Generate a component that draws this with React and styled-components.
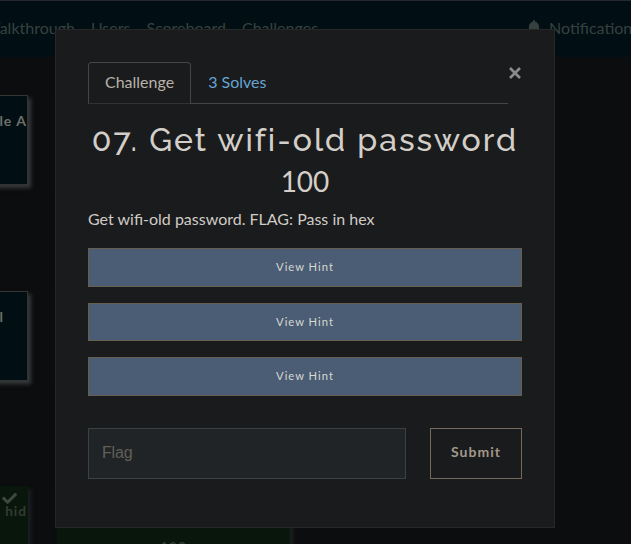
import React from "react";
import styled, { createGlobalStyle } from "styled-components";

const Global = createGlobalStyle`
  * { box-sizing: border-box; }
  body { margin: 0; background: #0c0d0f; font: 16px/24px Lato, sans-serif; overflow: hidden; }
  button, input { font-family: inherit; margin: 0; }
`;

const Page = styled.div`
  height: 544px;
  overflow: hidden;
  position: relative;
`;

const Navbar = styled.nav`
  height: 57px;
  border-top: 1px solid #25292f;
  background: #010e13;
  color: #36413f;
  display: flex;
  align-items: center;
  padding-bottom: 2px;
  white-space: nowrap;
`;

const NavLinks = styled.div`
  display: flex;
  gap: 16px;
  margin-left: -16px;
  width: 543px;
  flex-shrink: 0;
`;

const Notifications = styled.div`
  display: flex;
  gap: 8px;
  svg { margin-top: 4px; }
`;

const Board = styled.main`
  display: grid;
  grid-template-columns: 233px 233px;
  grid-auto-rows: 90px;
  gap: 106px 29px;
  margin: 38px 0 0 -205px;
`;

const Card = styled.div`
  background: ${(p) => (p.$solved ? "#08160c" : "#010e13")};
  border: 1px solid ${(p) => (p.$solved ? "#08160c" : "#34332f")};
  box-shadow: 3px 3px 4px ${(p) => (p.$solved ? "#1d2022" : "#363a3c")};
  color: ${(p) => (p.$solved ? "#343b35" : "#706e68")};
  font-weight: 700;
  font-size: ${(p) => (p.$solved ? "13.6px" : "14px")};
  line-height: 20px;
  letter-spacing: 1px;
  text-align: right;
  padding: ${(p) => (p.$solved ? 4 : 15)}px ${(p) => p.$inset ?? 0}px 0 0;
  margin-top: ${(p) => (p.$solved ? "-1px" : "0")};
  white-space: nowrap;
`;

const Check = styled.div`
  height: 10px;
  padding-right: 10px;
  display: flex;
  justify-content: flex-end;
`;

const Points = styled.div`
  padding-top: 46px;
  text-align: center;
`;

const Modal = styled.section`
  position: absolute;
  left: 55px;
  top: 29px;
  width: 500px;
  height: 499px;
  background: #1a1b1d;
  border: 1px solid #282725;
  padding: 32px;
`;

const Header = styled.div`
  display: flex;
  align-items: flex-start;
  height: 42px;
`;

const Tabs = styled.div`
  display: flex;
  width: 420px;
  height: 42px;
  border-bottom: 1px solid #424648;
`;

const Tab = styled.div`
  height: 42px;
  padding: 7px 16px;
  border: 1px solid ${(p) => (p.$active ? "#424648" : "transparent")};
  border-bottom-color: ${(p) => (p.$active ? "#303336" : "transparent")};
  border-radius: 4px 4px 0 0;
  color: ${(p) => (p.$active ? "#b8b2a8" : "#66a4d2")};
`;

const Close = styled.button`
  border: 0;
  padding: 5px 0 0 1px;
  background: none;
  line-height: 0;
`;

const Title = styled.h3`
  margin: 15px -8px 0;
  height: 42px;
  color: #d3cfc8;
  font: 500 32px/42px Raleway, Lato, sans-serif;
  letter-spacing: 2px;
  text-align: center;
  white-space: nowrap;
`;

const Value = styled.h4`
  margin: 0;
  height: 44px;
  color: #d3cfc8;
  font: 400 28px/41px Lato, sans-serif;
  text-align: center;
`;

const Description = styled.p`
  margin: 2px 0 17px;
  color: #d0ccc5;
`;

const Hints = styled.div`
  display: flex;
  flex-direction: column;
  gap: 16px;
`;

const Hint = styled.button`
  height: 38.5px;
  padding: 0 0 1px;
  border: 1px solid #675e50;
  background: #4a5d74;
  color: #d8d7d2;
  font-size: 11.2px;
  letter-spacing: 1px;
`;

const Form = styled.div`
  display: flex;
  gap: 24px;
  margin-top: 32px;
`;

const Flag = styled.input`
  width: 318px;
  height: 51px;
  padding: 0 13px;
  border: 1px solid #3b4143;
  background: #202426;
  font: 16px "Liberation Sans", sans-serif;
  letter-spacing: -0.2px;
  &::placeholder { color: #625f59; opacity: 1; }
`;

const Submit = styled.button`
  width: 92px;
  height: 51px;
  padding: 0 0 3px;
  border: 1px solid #756a5b;
  background: transparent;
  color: #a29888;
  font-size: 14px;
  font-weight: 700;
  letter-spacing: 1px;
`;

export default function App() {
  return (
    <Page>
      <Global />
      <Navbar>
        <NavLinks>
          <span>Walkthrough</span>
          <span>Users</span>
          <span>Scoreboard</span>
          <span>Challenges</span>
        </NavLinks>
        <Notifications>
          <svg width="14" height="16" viewBox="0 0 448 512" fill="currentColor">
            <path d="M224 512c35 0 64-29 64-64H160c0 35 29 64 64 64zm215-150c-19-20-55-52-55-154 0-78-54-140-128-155V32a32 32 0 0 0-64 0v21C118 68 64 130 64 208c0 102-36 134-55 154-22 22-5 54 23 54h384c28 0 45-32 23-54z" />
          </svg>
          <span>Notifications</span>
        </Notifications>
      </Navbar>
      <Board>
        <Card>Simple A</Card>
        <Card />
        <Card $inset={23}>Final</Card>
        <Card />
        <Card $solved>
          <Check>
            <svg width="15" height="15" viewBox="0 0 512 512" fill="#404641">
              <path d="M174 439 7 273c-10-10-10-26 0-36l37-37c10-10 26-10 36 0l112 112 240-240c10-10 26-10 36 0l37 37c10 10 10 26 0 36L210 439c-10 10-26 10-36 0z" />
            </svg>
          </Check>
          The hid
        </Card>
        <Card $solved>
          <Points>100</Points>
        </Card>
      </Board>
      <Modal>
        <Header>
          <Tabs>
            <Tab $active>Challenge</Tab>
            <Tab>3 Solves</Tab>
          </Tabs>
          <Close aria-label="Close">
            <svg width="12" height="12" viewBox="0 0 12 12" stroke="#8b8b8b" strokeWidth="2.7">
              <path d="M1 1 11 11M11 1 1 11" />
            </svg>
          </Close>
        </Header>
        <Title>07. Get wifi-old password</Title>
        <Value>100</Value>
        <Description>Get wifi-old password. FLAG: Pass in hex</Description>
        <Hints>
          <Hint>View Hint</Hint>
          <Hint>View Hint</Hint>
          <Hint>View Hint</Hint>
        </Hints>
        <Form>
          <Flag placeholder="Flag" />
          <Submit>Submit</Submit>
        </Form>
      </Modal>
    </Page>
  );
}
